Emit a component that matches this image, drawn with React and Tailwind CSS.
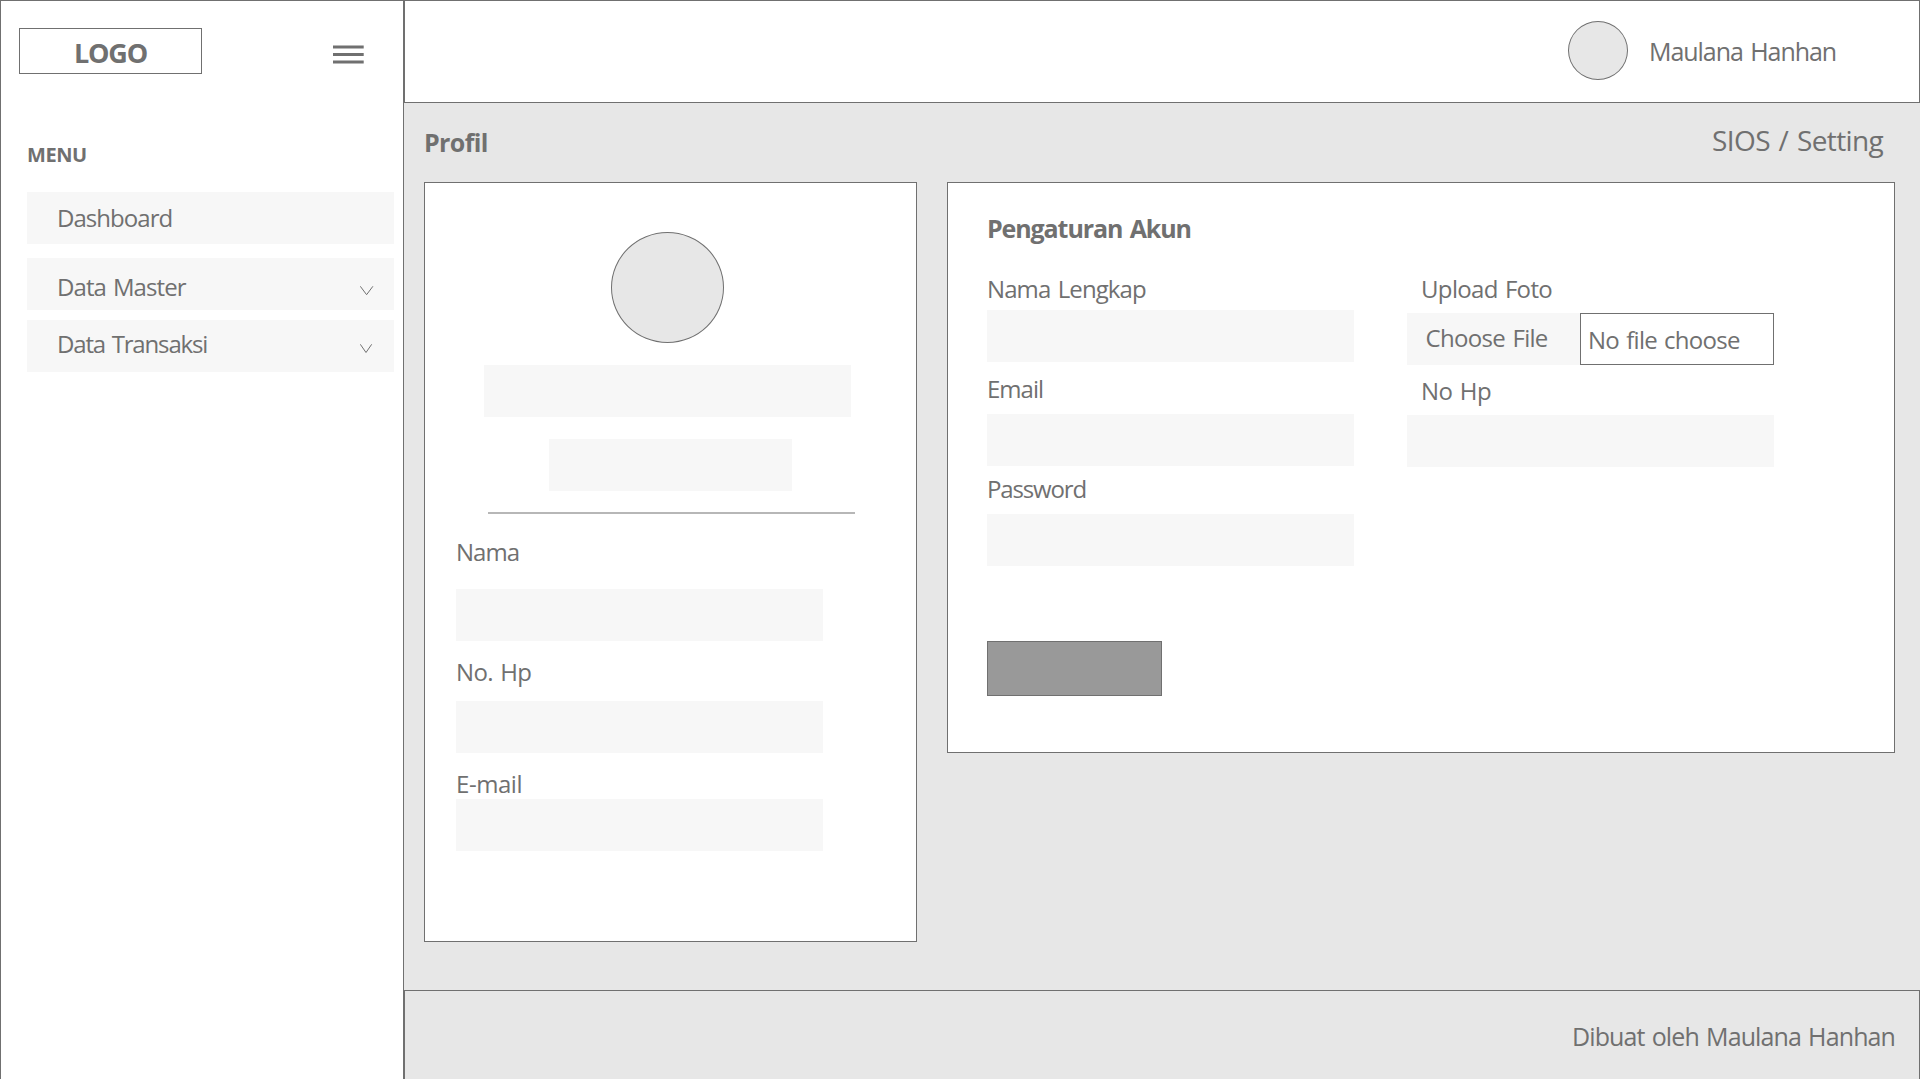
import React from "react";

const text24 = "text-[24px] leading-[33px] whitespace-nowrap";
const text25 = "text-[25px] leading-[34px] whitespace-nowrap";

function MenuItem({ label, className, chevron }) {
  return (
    <div className={`flex h-[52px] w-[367px] items-start justify-between bg-[#f7f7f7] pl-[30px] ${className}`}>
      <span className={text24}>{label}</span>
      {chevron}
    </div>
  );
}

function Chevron({ className, d }) {
  return (
    <svg className={`h-[10px] w-[14px] shrink-0 ${className}`} viewBox="0 0 14 10" fill="none" stroke="#707070" strokeWidth="1">
      <path d={d} />
    </svg>
  );
}

function Field({ label, className = "", labelClass, barClass = "w-[367px]" }) {
  return (
    <div className={className}>
      <div className={`${text24} ${labelClass}`}>{label}</div>
      <div className={`h-[52px] bg-[#f7f7f7] ${barClass}`} />
    </div>
  );
}

function Sidebar() {
  return (
    <aside className="h-full w-[404px] shrink-0 border border-b-0 border-[#707070] bg-white">
      <div className="flex items-start">
        <div className="mt-[27px] ml-[18px] h-[46px] w-[183px] border border-[#707070] pt-[5px] pl-[54px] text-[27px] leading-[37px] font-bold tracking-[-1.2px]">
          LOGO
        </div>
        <svg className="mt-[44px] ml-[131px] h-[20px] w-[31px]" viewBox="0 0 31 20" fill="#707070">
          <rect y="0.5" width="30.7" height="3" />
          <rect y="8" width="30.7" height="3" />
          <rect y="15.5" width="30.7" height="3" />
        </svg>
      </div>
      <div className="mt-[67px] ml-[26px] text-[20px] leading-[27px] font-bold tracking-[-0.4px]">MENU</div>
      <nav className="mt-[24px] ml-[26px]">
        <MenuItem label="Dashboard" className="pt-[9px] tracking-[-0.95px]" />
        <MenuItem
          label="Data Master"
          className="mt-[14px] pt-[12px] tracking-[-0.9px] [word-spacing:1.5px]"
          chevron={<Chevron className="mt-[16px] mr-[20px]" d="M0.3 0.3 L6.6 8.7 L12.9 0.3" />}
        />
        <MenuItem
          label="Data Transaksi"
          className="mt-[10px] pt-[7px] tracking-[-1.15px] [word-spacing:1.5px]"
          chevron={<Chevron className="mt-[17px] mr-[20px]" d="M0.3 0.3 L6 8.5 L11.7 0.3" />}
        />
      </nav>
    </aside>
  );
}

function ProfileCard() {
  return (
    <section className="h-[760px] w-[493px] border border-[#707070] bg-white">
      <div className="mt-[49px] ml-[186px] h-[111px] w-[113px] rounded-[50%] border border-[#707070] bg-[#e7e7e7]" />
      <div className="mt-[22px] ml-[59px] h-[52px] w-[367px] bg-[#f7f7f7]" />
      <div className="mt-[22px] ml-[124px] h-[52px] w-[243px] bg-[#f7f7f7]" />
      <div className="mt-[21px] ml-[63px] h-[2px] w-[367px] bg-[#b7b7b7]" />
      <div className="mt-[21px] ml-[31px]">
        <Field label="Nama" labelClass="h-[54px] tracking-[-1px]" />
        <Field label="No. Hp" className="mt-[14px]" labelClass="h-[46px] tracking-[-0.6px] [word-spacing:1.5px]" />
        <Field label="E-mail" className="mt-[14px]" labelClass="h-[32px] tracking-[-0.45px]" />
      </div>
    </section>
  );
}

function AccountCard() {
  return (
    <section className="ml-[30px] h-[571px] w-[948px] border border-[#707070] bg-white">
      <h2 className={`mt-[28px] ml-[39px] font-bold tracking-[-1.1px] [word-spacing:2px] ${text25}`}>Pengaturan Akun</h2>
      <div className="mt-[27px] ml-[39px] flex">
        <div>
          <Field label="Nama Lengkap" labelClass="h-[38px] tracking-[-0.9px] [word-spacing:2px]" />
          <Field label="Email" className="mt-[10px]" labelClass="h-[42px] tracking-[-1px]" />
          <Field label="Password" className="mt-[6px]" labelClass="h-[42px] tracking-[-1.15px]" />
          <button className="mt-[75px] block h-[55px] w-[175px] border border-[#707070] bg-[#999999]" />
        </div>
        <div className="ml-[53px]">
          <div className={`ml-[14px] h-[41px] tracking-[-0.65px] [word-spacing:1.5px] ${text24}`}>Upload Foto</div>
          <div className="flex h-[52px] w-[367px] bg-[#f7f7f7]">
            <div className={`w-[173px] pt-[8px] pl-[18.5px] tracking-[-0.7px] [word-spacing:2px] ${text24}`}>Choose File</div>
            <div className={`w-[194px] border border-[#707070] bg-white pt-[9px] pl-[7px] tracking-[-0.7px] [word-spacing:1.5px] ${text24}`}>
              No file choose
            </div>
          </div>
          <Field label="No Hp" className="mt-[9px]" labelClass="h-[41px] pl-[14px] tracking-[-0.5px] [word-spacing:1.5px]" />
        </div>
      </div>
    </section>
  );
}

export default function App() {
  return (
    <div className="flex h-[1079px] w-[1920px] overflow-hidden bg-[#e7e7e7] font-['Open_Sans',sans-serif] text-[#707070]">
      <Sidebar />
      <div className="flex min-w-0 flex-1 flex-col">
        <header className="flex h-[103px] shrink-0 items-start justify-end border border-[#707070] bg-white pr-[83px]">
          <div className="mt-[20px] h-[59px] w-[60px] rounded-[50%] border border-[#707070] bg-[#e7e7e7]" />
          <div className={`mt-[33px] ml-[21px] w-[187px] tracking-[-1.05px] [word-spacing:2px] ${text25}`}>Maulana Hanhan</div>
        </header>
        <main className="flex-1 pl-[20px]">
          <div className="flex h-[79px] items-start justify-between">
            <h1 className={`mt-[22px] font-bold tracking-[-0.6px] ${text25}`}>Profil</h1>
            <div className="mt-[18px] w-[208px] text-[28px] leading-[38px] tracking-[-0.6px] whitespace-nowrap [word-spacing:2px]">SIOS / Setting</div>
          </div>
          <div className="flex items-start">
            <ProfileCard />
            <AccountCard />
          </div>
        </main>
        <footer className="flex h-[89px] shrink-0 justify-end border border-b-0 border-[#707070] pt-[28px]">
          <div className={`w-[347px] tracking-[-0.88px] [word-spacing:1.5px] ${text25}`}>Dibuat oleh Maulana Hanhan</div>
        </footer>
      </div>
    </div>
  );
}
